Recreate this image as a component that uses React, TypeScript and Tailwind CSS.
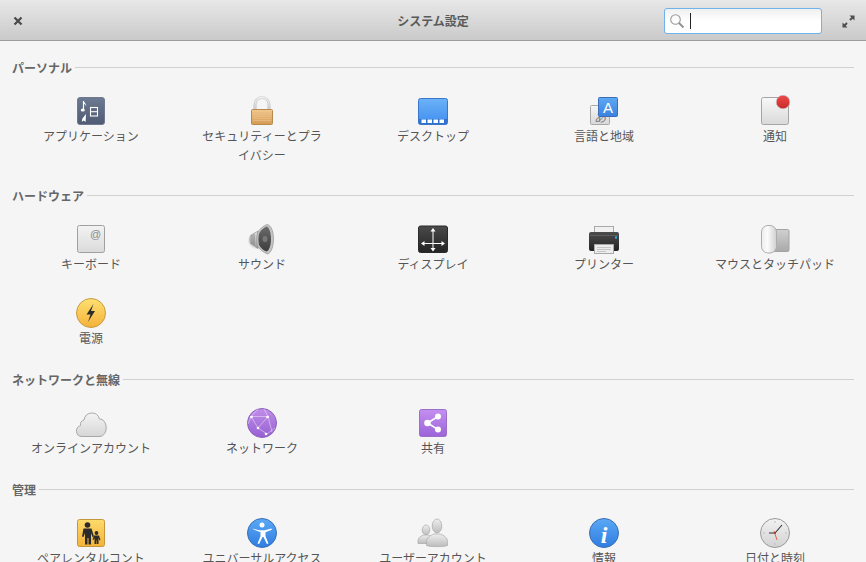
import React from "react";

const FONT = "font-['Open_Sans','Noto_Sans_CJK_JP',sans-serif]";

type Item = { label: string; icon: React.ReactNode };

const Grad = ({ id, from, to }: { id: string; from: string; to: string }) => (
  <linearGradient id={id} x1="0" y1="0" x2="0" y2="1">
    <stop offset="0" stopColor={from} />
    <stop offset="1" stopColor={to} />
  </linearGradient>
);

const Svg = ({ children }: { children: React.ReactNode }) => (
  <svg width="32" height="32" viewBox="0 0 32 32" className="block">
    {children}
  </svg>
);

const AppsIcon = () => (
  <Svg>
    <defs><Grad id="apps" from="#6c7a92" to="#4f5b72" /></defs>
    <rect x="2.5" y="2.5" width="27" height="27" rx="2.5" fill="url(#apps)" stroke="#6f7a8e" />
    <path d="M8.5 6v9.2" stroke="#fff" strokeWidth="1.2" />
    <ellipse cx="7.8" cy="15" rx="2" ry="1.6" fill="#fff" />
    <path d="M8.800 6c.4 2 3 2.600 2.400 5.400-.5-1.600-1.400-2.300-2.400-2.600z" fill="#fff" />
    <path d="M11 19l-.4 8-1.800-1.600-2 1.400.6-3.200z" fill="#fff" />
    <rect x="15.5" y="12.5" width="7" height="8.5" fill="none" stroke="#fff" strokeWidth="1.1" />
    <path d="M15.5 16.700h7" stroke="#fff" strokeWidth="1.1" />
  </Svg>
);

const LockIcon = () => (
  <Svg>
    <defs>
      <Grad id="lock" from="#f3c98f" to="#d49a52" />
      <Grad id="shackle" from="#dedede" to="#b4b4b4" />
    </defs>
    <path d="M9 15V9.500a7 7 0 0 1 14 0V15" fill="none" stroke="url(#shackle)" strokeWidth="3" />
    <path d="M9 15V9.500a7 7 0 0 1 14 0V15" fill="none" stroke="#fff" strokeWidth="0.8" opacity="0.8" />
    <rect x="5.5" y="14.5" width="21" height="15" rx="1" fill="url(#lock)" stroke="#b98a4e" />
    <path d="M7 17.500h18M7 19.500h18M7 21.500h18M7 23.500h18M7 25.500h18" stroke="#e9bd85" strokeWidth="0.8" />
  </Svg>
);

const DesktopIcon = () => (
  <Svg>
    <defs><Grad id="desk" from="#6cb2f7" to="#3f8ef0" /></defs>
    <rect x="1.5" y="3.5" width="29" height="26" rx="2" fill="url(#desk)" stroke="#3a76c9" />
    <rect x="2" y="24" width="28" height="5" fill="#2f73cf" />
    <path d="M4.500 24.500h4.500v3.500h-4.500zM10.500 24.500h4.500v3.500h-4.500zM16.500 24.500h4.500v3.500h-4.500zM22.500 24.500h4.500v3.500h-4.500z" fill="#fff" />
  </Svg>
);

const LanguageIcon = () => (
  <Svg>
    <defs>
      <Grad id="lang" from="#5fa8f4" to="#3b82e0" />
      <Grad id="langb" from="#f5f5f5" to="#d8d8d8" />
    </defs>
    <rect x="2.5" y="10.5" width="19" height="19" rx="1" fill="url(#langb)" stroke="#a8a8a8" />
    <text x="6" y="27" fontSize="12" fontStyle="italic" fill="#777" fontFamily="'Noto Sans CJK JP',sans-serif">あ</text>
    <rect x="10.5" y="2.5" width="19" height="19" rx="1" fill="url(#lang)" stroke="#3a6fb8" />
    <text x="20" y="18" fontSize="15" textAnchor="middle" fill="#fff" fontFamily="'Liberation Sans',sans-serif">A</text>
  </Svg>
);

const NotifyIcon = () => (
  <Svg>
    <defs>
      <Grad id="note" from="#f8f8f8" to="#d9d9d9" />
      <Grad id="red" from="#ee4a4a" to="#c92a2a" />
    </defs>
    <rect x="2.5" y="2.5" width="27" height="27" rx="2" fill="url(#note)" stroke="#a5a5a5" />
    <circle cx="24" cy="7" r="6.800" fill="url(#red)" stroke="#c8c8c8" strokeWidth="0.6" />
  </Svg>
);

const KeyboardIcon = () => (
  <Svg>
    <defs><Grad id="key" from="#f3f3f3" to="#dadada" /></defs>
    <rect x="2.5" y="2.5" width="27" height="27" rx="2" fill="url(#key)" stroke="#a0a0a0" />
    <text x="20.5" y="14.5" fontSize="11" textAnchor="middle" fill="#8a8a8a" fontFamily="'Liberation Sans',sans-serif">@</text>
  </Svg>
);

const SoundIcon = () => (
  <Svg>
    <defs>
      <Grad id="cone" from="#6a6a6a" to="#3d3d3d" />
      <Grad id="mag" from="#e4e4e4" to="#9a9a9a" />
    </defs>
    <ellipse cx="12" cy="18" rx="10" ry="8" fill="#000" opacity="0.07" />
    <path d="M5 12c-1.500 1.500-1.500 7.500 0 9l7 4.500V8z" fill="url(#mag)" stroke="#888" strokeWidth="0.6" />
    <path d="M8 11v11M6 12v9" stroke="#777" strokeWidth="0.8" />
    <path d="M21 1.500C17 3 13 6.500 11.500 10c-1 4-1 9 0 13 2 3.500 6 6.500 10 8C25 30 27.500 24 27.500 16S25 2 21 1.500z" fill="#c4c4c4" stroke="#8a8a8a" strokeWidth="0.6" />
    <path d="M20.500 3.500C17 5 14 8 13 11c-.8 3.500-.8 7.500 0 11 1.500 3 4.500 5.300 7.500 6.500 2.500-.5 4.500-6 4.500-12.500S23 4 20.500 3.500z" fill="url(#cone)" />
    <ellipse cx="19" cy="16" rx="2.500" ry="3" fill="#777" />
  </Svg>
);

const DisplayIcon = () => (
  <Svg>
    <defs><Grad id="disp" from="#4a4a4a" to="#242424" /></defs>
    <rect x="1.500" y="3" width="29" height="26.500" rx="2" fill="url(#disp)" stroke="#2a2a2a" />
    <path d="M16 6.500v20M6 20.500h20" stroke="#fff" strokeWidth="1" />
    <path d="M16 5l-2.500 3.500h5zM16 28.500l-2.500-3.500h5zM4 20.500l3.500-2.500v5zM28 20.500l-3.500-2.500v5z" fill="#fff" />
  </Svg>
);

const PrinterIcon = () => (
  <Svg>
    <defs><Grad id="print" from="#4c4c4c" to="#232323" /></defs>
    <rect x="6.500" y="3.500" width="19" height="10" fill="#f0f0f0" stroke="#a9a9a9" />
    <path d="M3 9h26a2 2 0 0 1 2 2v15a2 2 0 0 1-2 2H3a2 2 0 0 1-2-2V11a2 2 0 0 1 2-2z" fill="url(#print)" />
    <path d="M2 12.500h28" stroke="#5d5d5d" />
    <rect x="6.500" y="21.500" width="19" height="9" fill="#ececec" stroke="#a9a9a9" />
    <path d="M9 24.500h14M9 26.500h14M9 28.500h9" stroke="#bdbdbd" strokeWidth="0.8" />
    <rect x="27" y="13.500" width="2" height="2" fill="#28b6f0" />
  </Svg>
);

const MouseIcon = () => (
  <Svg>
    <defs>
      <Grad id="pad" from="#d0d0d0" to="#a9a9a9" />
      <linearGradient id="mouse" x1="0" y1="0" x2="1" y2="0">
        <stop offset="0" stopColor="#ededed" />
        <stop offset="0.4" stopColor="#fbfbfb" />
        <stop offset="1" stopColor="#d0d0d0" />
      </linearGradient>
    </defs>
    <rect x="14.500" y="6.500" width="15.500" height="22" rx="1.500" fill="url(#pad)" stroke="#a3a3a3" />
    <rect x="2.500" y="2.500" width="15" height="27.500" rx="6.500" fill="url(#mouse)" stroke="#adadad" />
  </Svg>
);

const PowerIcon = () => (
  <Svg>
    <defs><Grad id="power" from="#fde172" to="#f5b23a" /></defs>
    <circle cx="16" cy="16" r="14.500" fill="url(#power)" stroke="#c99a42" />
    <path d="M18.500 7l-7 10.500h4l-2.500 7.500 7-11h-4z" fill="#2c2c2c" />
  </Svg>
);

const CloudIcon = () => (
  <Svg>
    <defs><Grad id="cloud" from="#f4f4f4" to="#d6d6d6" /></defs>
    <path d="M7 29.500A5.500 5.500 0 0 1 5.500 18.700A5 5 0 0 1 9 13A8 8.500 0 0 1 24.500 12A6.500 8.750 0 0 1 25 29.500z" fill="url(#cloud)" stroke="#a8a8a8" />
  </Svg>
);

const NetworkIcon = () => (
  <Svg>
    <defs><Grad id="net" from="#c08ee8" to="#9660d2" /></defs>
    <circle cx="16" cy="16" r="14.500" fill="url(#net)" stroke="#8d62bd" />
    <path d="M5 9.500L22 9.500M5 9.500L12 21l9 6M22 9.500L12 21M22 9.500L26 25M2 17L5 9.500M12 2l-7 7.500M22 9.500L18 2M21 27L29 21" stroke="#e9d8f7" strokeWidth="0.6" fill="none" />
    <circle cx="5.500" cy="10" r="1.300" fill="#fff" />
    <circle cx="21.500" cy="10" r="1.300" fill="#fff" />
    <circle cx="12" cy="21" r="1.300" fill="#fff" />
    <circle cx="20" cy="27" r="1.300" fill="#fff" />
  </Svg>
);

const ShareIcon = () => (
  <Svg>
    <defs><Grad id="share" from="#c48ff0" to="#9b63d8" /></defs>
    <rect x="2.500" y="2.500" width="27" height="27" rx="2" fill="url(#share)" stroke="#9a6fc9" />
    <path d="M21 9.500L10.500 16L21 22.500" stroke="#fff" strokeWidth="1.500" fill="none" />
    <circle cx="21" cy="9.500" r="3" fill="#fff" />
    <circle cx="10.500" cy="16" r="3.300" fill="#fff" />
    <circle cx="21" cy="22.500" r="3" fill="#fff" />
  </Svg>
);

const ParentalIcon = () => (
  <Svg>
    <defs><Grad id="par" from="#fddb6d" to="#f4b338" /></defs>
    <rect x="2.500" y="2.500" width="27" height="27" rx="2" fill="url(#par)" stroke="#c6963c" />
    <circle cx="12.500" cy="8" r="2.800" fill="#2b2b2b" />
    <path d="M8.500 11.500h8l2.500 8-1.500.5-1.500-4v11.500h-2.500V21h-1v6.500H10V16l-1.500 4-1.500-.5z" fill="#2b2b2b" />
    <circle cx="21.500" cy="16" r="1.900" fill="#2b2b2b" />
    <path d="M19 18.500h5l1.500 4.500-1 .5-1-2.500v6h-1.500v-3.500h-.5V27H19.500v-6l-1 2-1-.5z" fill="#2b2b2b" />
  </Svg>
);

const AccessIcon = () => (
  <Svg>
    <defs><Grad id="acc" from="#5ba8f5" to="#2f7de0" /></defs>
    <circle cx="16" cy="16" r="14.500" fill="url(#acc)" stroke="#3a6fb5" />
    <circle cx="16" cy="8" r="2.500" fill="#fff" />
    <path d="M6.500 11.500l7 1.800h5l7-1.800.4 1.300-6.400 2.500v4l3 7.200-1.600.6-3.400-7h-1l-3.400 7-1.600-.6 3-7.200v-4l-6.400-2.500z" fill="#fff" />
  </Svg>
);

const UsersIcon = () => (
  <Svg>
    <defs><Grad id="usr" from="#eeeeee" to="#bcbcbc" /></defs>
    <ellipse cx="9" cy="13" rx="3.800" ry="5" fill="url(#usr)" stroke="#a9a9a9" strokeWidth="0.7" />
    <path d="M1 24c0-3.500 3-5 6-6h4c3 1 5 3 5 6v2.500H1z" fill="url(#usr)" stroke="#a9a9a9" strokeWidth="0.7" />
    <ellipse cx="20" cy="9" rx="4.800" ry="7" fill="url(#usr)" stroke="#a9a9a9" strokeWidth="0.7" />
    <path d="M9.500 24.500c0-4 3.500-6 7.500-7.500h6c4 1.500 7.500 3.500 7.500 7.500v4c-3 1.500-18 1.500-21 0z" fill="url(#usr)" stroke="#a9a9a9" strokeWidth="0.7" />
  </Svg>
);

const InfoIcon = () => (
  <Svg>
    <defs><Grad id="inf" from="#5ba8f5" to="#2f7de0" /></defs>
    <circle cx="16" cy="16" r="14.500" fill="url(#inf)" stroke="#3a6fb5" />
    <text x="16" y="26" fontSize="24" fontStyle="italic" fontWeight="700" textAnchor="middle" fill="#fff" fontFamily="'Liberation Serif',serif">i</text>
  </Svg>
);

const ClockIcon = () => (
  <Svg>
    <defs><Grad id="clk" from="#f2f2f2" to="#d2d2d2" /></defs>
    <circle cx="16" cy="16" r="14.500" fill="url(#clk)" stroke="#9a9a9a" />
    <path d="M16 4v2M16 26v2M4 16h2M26 16h2" stroke="#bbb" />
    <path d="M16 16l7-8M16 16h-6" stroke="#333" strokeWidth="1.100" />
    <path d="M15 14l3 9" stroke="#e2664a" strokeWidth="1" />
    <circle cx="16" cy="16" r="1" fill="#a33" />
  </Svg>
);

const sections: { title: string; items: Item[] }[] = [
  {
    title: "パーソナル",
    items: [
      { label: "アプリケーション", icon: <AppsIcon /> },
      { label: "セキュリティーとプライバシー", icon: <LockIcon /> },
      { label: "デスクトップ", icon: <DesktopIcon /> },
      { label: "言語と地域", icon: <LanguageIcon /> },
      { label: "通知", icon: <NotifyIcon /> },
    ],
  },
  {
    title: "ハードウェア",
    items: [
      { label: "キーボード", icon: <KeyboardIcon /> },
      { label: "サウンド", icon: <SoundIcon /> },
      { label: "ディスプレイ", icon: <DisplayIcon /> },
      { label: "プリンター", icon: <PrinterIcon /> },
      { label: "マウスとタッチパッド", icon: <MouseIcon /> },
      { label: "電源", icon: <PowerIcon /> },
    ],
  },
  {
    title: "ネットワークと無線",
    items: [
      { label: "オンラインアカウント", icon: <CloudIcon /> },
      { label: "ネットワーク", icon: <NetworkIcon /> },
      { label: "共有", icon: <ShareIcon /> },
    ],
  },
  {
    title: "管理",
    items: [
      // word joiner keeps ロ and ー on one line
      { label: "ペアレンタルコントロ\u2060ール", icon: <ParentalIcon /> },
      { label: "ユニバーサルアクセス", icon: <AccessIcon /> },
      { label: "ユーザーアカウント", icon: <UsersIcon /> },
      { label: "情報", icon: <InfoIcon /> },
      { label: "日付と時刻", icon: <ClockIcon /> },
    ],
  },
];

const Header = () => (
  <header className="grid grid-cols-[1fr_auto_1fr] items-center h-[41px] shrink-0 border-b border-[#9c9c9c] bg-gradient-to-b from-[#e8e8e8] to-[#cacaca]">
    <div className="pl-[13px] pt-[2px]">
      <svg width="10" height="10" viewBox="0 0 10 10" className="block">
        <path d="M1.500 1.500l7 7M8.500 1.500l-7 7" stroke="#4a4a4a" strokeWidth="2.200" />
      </svg>
    </div>
    <h1 className="pt-[4px] text-xs font-bold text-[#5a5a5a]">システム設定</h1>
    <div className="flex items-center justify-end gap-[20px] pr-[11px] pt-[2px]">
      <div className="flex items-center w-[158px] h-[26px] rounded-[3px] border border-[#6fb3ee] bg-gradient-to-b from-[#f0f0f0] via-white to-white pl-[4px]">
        <svg width="16" height="16" viewBox="0 0 16 16" className="block shrink-0">
          <circle cx="6.500" cy="6.500" r="4.800" fill="none" stroke="#9a9a9a" strokeWidth="1.100" />
          <path d="M10 10l4.500 4.500" stroke="#8f8f8f" strokeWidth="1.800" />
        </svg>
        <span className="ml-[5px] w-px h-[16px] bg-[#222]" />
      </div>
      <svg width="13" height="13" viewBox="0 0 13 13" className="block">
        <path d="M7.500 0.500h5v5l-1.800-1.800-2 2-1.400-1.400 2-2zM5.500 12.500h-5v-5l1.800 1.800 2-2 1.400 1.400-2 2z" fill="#4e4e4e" />
      </svg>
    </div>
  </header>
);

export default function App() {
  return (
    <div className={`${FONT} h-screen overflow-hidden flex flex-col bg-[#f5f5f5]`}>
      <Header />
      <main className="pt-[18px]">
        {sections.map((section) => (
          <section key={section.title} className="pb-[12px]">
            <div className="flex items-center h-[18px] px-[12px] gap-[3px]">
              <h2 className="mt-[2px] text-xs font-bold leading-[18px] text-[#666]">{section.title}</h2>
              <div className="flex-1 h-px mb-[2px] bg-[#d0d0d0]" />
            </div>
            <div className="grid grid-cols-5 mt-[6px] px-[5.500px]">
              {section.items.map((item) => (
                <div key={item.label} className="flex flex-col items-center pt-[12px] pb-[10px] min-h-[74px]">
                  {item.icon}
                  <span className="max-w-[121px] text-xs leading-[19px] text-center text-[#555]">{item.label}</span>
                </div>
              ))}
            </div>
          </section>
        ))}
      </main>
    </div>
  );
}
